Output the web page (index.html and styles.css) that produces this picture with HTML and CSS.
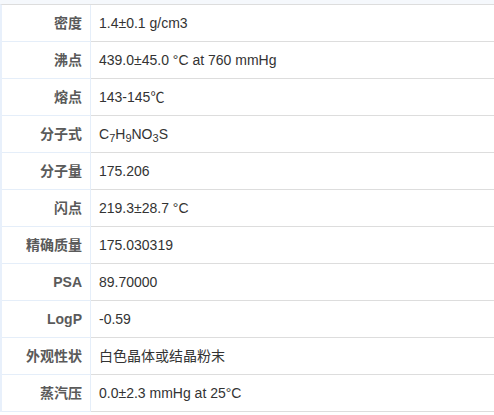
FILE: index.html
```html
<!DOCTYPE html>
<html>
<head>
<meta charset="utf-8">
<link rel="stylesheet" href="styles.css">
</head>
<body>
<div class="page">
  <div class="props">
    <div class="row"><div class="label">密度</div><div class="value">1.4±0.1 g/cm3</div></div>
    <div class="row"><div class="label">沸点</div><div class="value">439.0±45.0 °C at 760 mmHg</div></div>
    <div class="row"><div class="label">熔点</div><div class="value">143-145℃</div></div>
    <div class="row"><div class="label">分子式</div><div class="value">C<sub>7</sub>H<sub>9</sub>NO<sub>3</sub>S</div></div>
    <div class="row"><div class="label">分子量</div><div class="value">175.206</div></div>
    <div class="row"><div class="label">闪点</div><div class="value">219.3±28.7 °C</div></div>
    <div class="row"><div class="label">精确质量</div><div class="value">175.030319</div></div>
    <div class="row"><div class="label">PSA</div><div class="value">89.70000</div></div>
    <div class="row"><div class="label">LogP</div><div class="value">-0.59</div></div>
    <div class="row"><div class="label">外观性状</div><div class="value">白色晶体或结晶粉末</div></div>
    <div class="row"><div class="label">蒸汽压</div><div class="value">0.0±2.3 mmHg at 25°C</div></div>
  </div>
</div>
</body>
</html>
```
FILE: styles.css
```css
html, body {
  margin: 0;
  padding: 0;
  background: #ffffff;
}
.page {
  padding-top: 4px;
  background: #f5f8fc;
  font-family: "Liberation Sans", Arial, "Noto Sans CJK SC", sans-serif;
  font-size: 14px;
}
.props {
  background: #ffffff;
  border-left: 2px solid #e8f0fb;
  border-top: 1px solid #dddddd;
}
.row {
  display: grid;
  grid-template-columns: 89px 1fr;
  height: 37px;
}
.label {
  border-right: 1px solid #e5eef9;
  border-bottom: 1px solid #e5eef9;
  padding-right: 8px;
  text-align: right;
  font-weight: bold;
  color: #5a5a5a;
  line-height: 36px;
}
.value {
  border-bottom: 1px solid #dddddd;
  padding-left: 8px;
  color: #333333;
  line-height: 36px;
  white-space: nowrap;
}
sub {
  font-size: 11px;
  vertical-align: -3px;
  line-height: 0;
}
```
